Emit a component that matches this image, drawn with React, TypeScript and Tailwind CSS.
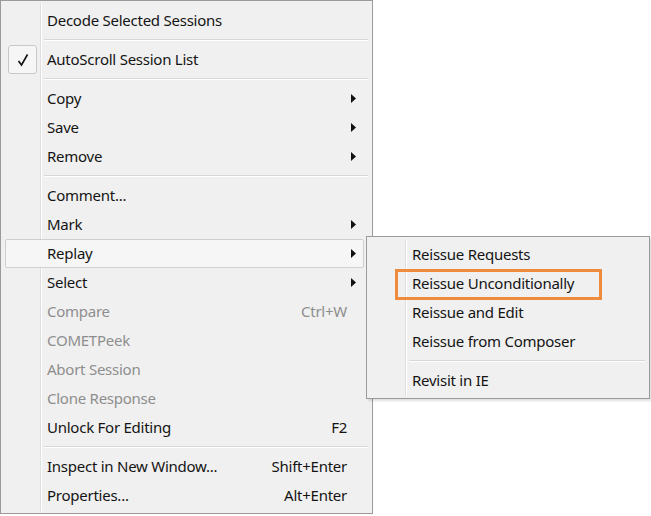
import React from 'react';

type Item =
  | { sep: true }
  | { label: string; arrow?: boolean; shortcut?: string; disabled?: boolean; checked?: boolean; hot?: boolean };

const mainItems: Item[] = [
  { label: 'Decode Selected Sessions' },
  { sep: true },
  { label: 'AutoScroll Session List', checked: true },
  { sep: true },
  { label: 'Copy', arrow: true },
  { label: 'Save', arrow: true },
  { label: 'Remove', arrow: true },
  { sep: true },
  { label: 'Comment...' },
  { label: 'Mark', arrow: true },
  { label: 'Replay', arrow: true, hot: true },
  { label: 'Select', arrow: true },
  { label: 'Compare', shortcut: 'Ctrl+W', disabled: true },
  { label: 'COMETPeek', disabled: true },
  { label: 'Abort Session', disabled: true },
  { label: 'Clone Response', disabled: true },
  { label: 'Unlock For Editing', shortcut: 'F2' },
  { sep: true },
  { label: 'Inspect in New Window...', shortcut: 'Shift+Enter' },
  { label: 'Properties...', shortcut: 'Alt+Enter' },
];

const subItems: Item[] = [
  { label: 'Reissue Requests' },
  { label: 'Reissue Unconditionally', hot: true },
  { label: 'Reissue and Edit' },
  { label: 'Reissue from Composer' },
  { sep: true },
  { label: 'Revisit in IE' },
];

function Arrow() {
  return (
    <svg width="5" height="9" viewBox="0 0 5 9" className="shrink-0">
      <path d="M0 0 L5 4.5 L0 9 Z" fill="#111" />
    </svg>
  );
}

function Check() {
  return (
    <div className="absolute left-[5px] top-[0px] w-[29px] h-[29px] rounded-[3px] border border-[#c8c8c8] bg-[#f6f6f6] flex items-center justify-center">
      <svg width="12" height="14" viewBox="0 0 12 14">
        <path d="M1.5 8 L4.5 12 L10.5 1.5" stroke="#111" strokeWidth="1.6" fill="none" />
      </svg>
    </div>
  );
}

function MainMenu() {
  return (
    <div className="relative w-[373px] h-[514px] border border-[#9a9a9a] bg-[#f0f0f0] pt-[5px] pb-[3px] px-[2px]">
      {/* gutter */}
      <div className="absolute left-[39px] top-[2px] bottom-[2px] w-px bg-[#dedede]" />
      <div className="absolute left-[40px] top-[2px] bottom-[2px] w-px bg-white" />
      <div className="relative flex flex-col">
        {mainItems.map((it, i) =>
          'sep' in it ? (
            <div key={i} className="h-[10px] flex flex-col justify-center pl-[41px] pr-[2px]">
              <div className="h-px bg-[#d7d7d7]" />
              <div className="h-px bg-white" />
            </div>
          ) : it.hot ? (
            <div
              key={i}
              className="relative h-[29px] flex items-center ml-[2px] mr-[6px] pl-[41px] pr-[7px] border border-[#cfcfcf] rounded-[2px] bg-[#f6f6f6] text-[15px] tracking-[-0.25px] text-[#141414]"
            >
              <span className="flex-1">{it.label}</span>
              <Arrow />
            </div>
          ) : (
            <div
              key={i}
              className={
                'relative h-[29px] flex items-center pl-[44px] pr-[14px] text-[15px] tracking-[-0.25px] ' +
                (it.disabled ? 'text-[#8e8e8e]' : 'text-[#141414]')
              }
            >
              {it.checked && <Check />}
              <span className="flex-1">{it.label}</span>
              {it.shortcut && <span className="pr-[9px]">{it.shortcut}</span>}
              {it.arrow && <Arrow />}
            </div>
          ),
        )}
      </div>
    </div>
  );
}

function SubMenu() {
  return (
    <div className="absolute left-[366px] top-[236px] w-[284px] h-[163px] border border-[#9a9a9a] bg-[#f0f0f0] pt-[3px] px-[2px] shadow-[2px_2px_2px_rgba(0,0,0,0.12)]">
      <div className="absolute left-[38px] top-[2px] bottom-[2px] w-px bg-[#dedede]" />
      <div className="absolute left-[39px] top-[2px] bottom-[2px] w-px bg-white" />
      <div className="relative flex flex-col">
        {subItems.map((it, i) =>
          'sep' in it ? (
            <div key={i} className="h-[10px] flex flex-col justify-center pl-[40px] pr-[2px]">
              <div className="h-px bg-[#d7d7d7]" />
              <div className="h-px bg-white" />
            </div>
          ) : (
            <div key={i} className="relative h-[29px] flex items-center pl-[43px] text-[15px] tracking-[-0.25px] text-[#141414]">
              {it.hot && (
                <div className="absolute left-[26px] top-[0px] w-[207px] h-[31px] border-[3px] border-[#f08a3c]" />
              )}
              <span className="relative">{it.label}</span>
            </div>
          ),
        )}
      </div>
    </div>
  );
}

export default function App() {
  return (
    <div className="relative w-[651px] h-[516px] bg-white font-['Noto_Sans',sans-serif]">
      <MainMenu />
      <SubMenu />
    </div>
  );
}
